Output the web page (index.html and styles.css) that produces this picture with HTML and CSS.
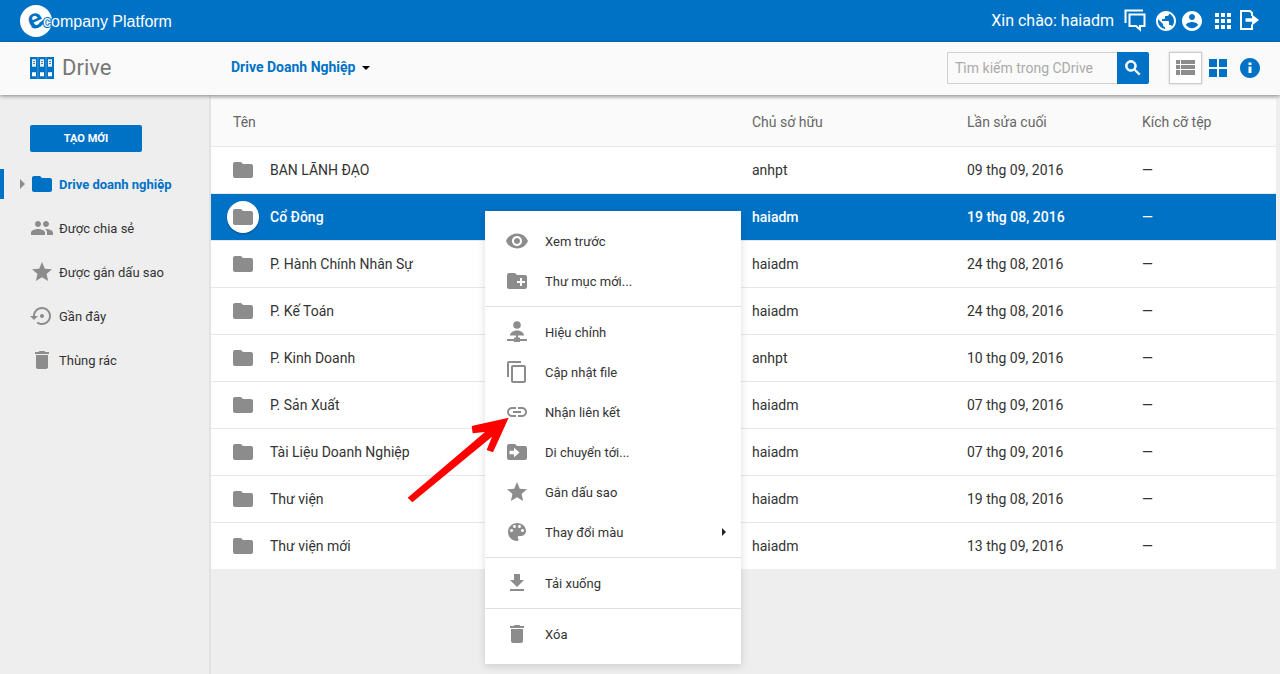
FILE: index.html
```html
<!DOCTYPE html>
<html lang="vi">
<head>
<meta charset="utf-8">
<meta name="viewport" content="width=device-width, initial-scale=1">
<title>Drive</title>
<link rel="stylesheet" href="styles.css">
</head>
<body>
<svg class="sprite" aria-hidden="true">
  <symbol id="folder" viewBox="0 0 24 24"><path d="M10 4H4c-1.100 0-2 .9-2 2v12c0 1.100.9 2 2 2h16c1.100 0 2-.9 2-2V8c0-1.100-.9-2-2-2h-8l-2-2z"/></symbol>
  <symbol id="people" viewBox="0 0 24 24"><path d="M16 11c1.660 0 3-1.340 3-3s-1.340-3-3-3-3 1.340-3 3 1.340 3 3 3zm-8 0c1.660 0 3-1.340 3-3S9.660 5 8 5 5 6.340 5 8s1.340 3 3 3zm0 2c-2.330 0-7 1.170-7 3.500V19h14v-2.500c0-2.330-4.670-3.500-7-3.500zm8 0c-.29 0-.62.02-.97.05 1.160.84 1.970 1.970 1.970 3.450V19h6v-2.500c0-2.330-4.670-3.500-7-3.500z"/></symbol>
  <symbol id="star" viewBox="0 0 24 24"><path d="M12 17.270L18.180 21l-1.640-7.030L22 9.240l-7.190-.61L12 2 9.190 8.630 2 9.240l5.460 4.730L5.820 21z"/></symbol>
  <symbol id="recent" viewBox="0 0 24 24"><path d="M14 12c0-1.100-.9-2-2-2s-2 .9-2 2 .9 2 2 2 2-.9 2-2zm-2-9c-4.970 0-9 4.030-9 9H0l4 4 4-4H5c0-3.870 3.130-7 7-7s7 3.130 7 7-3.130 7-7 7c-1.510 0-2.910-.49-4.060-1.300l-1.420 1.440C8.040 20.300 9.940 21 12 21c4.970 0 9-4.030 9-9s-4.030-9-9-9z"/></symbol>
  <symbol id="trash" viewBox="0 0 24 24"><path d="M6 19c0 1.100.9 2 2 2h8c1.100 0 2-.9 2-2V7H6v12zM19 4h-3.500l-1-1h-5l-1 1H5v2h14V4z"/></symbol>
  <symbol id="eye" viewBox="0 0 24 24"><path d="M12 4.500C7 4.500 2.730 7.610 1 12c1.730 4.390 6 7.500 11 7.500s9.270-3.110 11-7.500c-1.730-4.390-6-7.500-11-7.500zM12 17c-2.760 0-5-2.240-5-5s2.240-5 5-5 5 2.240 5 5-2.240 5-5 5zm0-8c-1.660 0-3 1.340-3 3s1.340 3 3 3 3-1.340 3-3-1.340-3-3-3z"/></symbol>
  <symbol id="new-folder" viewBox="0 0 24 24"><path d="M20 6h-8l-2-2H4c-1.110 0-1.990.89-1.990 2L2 18c0 1.110.89 2 2 2h16c1.110 0 2-.89 2-2V8c0-1.110-.89-2-2-2zm0 8h-3v3h-2v-3h-3v-2h3V9h2v3h3v2z"/></symbol>
  <symbol id="edit-user" viewBox="0 0 24 24"><circle cx="12" cy="5" r="3.800"/><path d="M5 15.500c0-3.500 4-5 7-5s7 1.500 7 5zM11 15h2v2.500h2V19h7v2h-7v1H9v-1H2v-2h7v-1.500h2z"/></symbol>
  <symbol id="copy" viewBox="0 0 24 24"><path d="M16 1H4c-1.100 0-2 .9-2 2v14h2V3h12V1zm3 4H8c-1.100 0-2 .9-2 2v14c0 1.100.9 2 2 2h11c1.100 0 2-.9 2-2V7c0-1.100-.9-2-2-2zm0 16H8V7h11v14z"/></symbol>
  <symbol id="link" viewBox="0 0 24 24"><path d="M3.900 12c0-1.710 1.390-3.100 3.100-3.100h4V7H7c-2.760 0-5 2.240-5 5s2.240 5 5 5h4v-1.900H7c-1.710 0-3.100-1.390-3.100-3.100zM8 13h8v-2H8v2zm9-6h-4v1.900h4c1.710 0 3.100 1.390 3.100 3.100s-1.390 3.100-3.100 3.100h-4V17h4c2.760 0 5-2.240 5-5s-2.240-5-5-5z"/></symbol>
  <symbol id="move" viewBox="0 0 24 24"><path fill-rule="evenodd" d="M10 4H4c-1.100 0-2 .9-2 2v12c0 1.100.9 2 2 2h16c1.100 0 2-.9 2-2V8c0-1.100-.9-2-2-2h-8l-2-2zM4.500 10.800H9V7.700l5.500 4.800L9 17.300v-3.100H4.500z"/></symbol>
  <symbol id="palette" viewBox="0 0 24 24"><path d="M12 3c-4.970 0-9 4.030-9 9s4.030 9 9 9c.83 0 1.500-.67 1.500-1.500 0-.39-.15-.74-.39-1.010-.23-.26-.38-.61-.38-.99 0-.83.67-1.500 1.500-1.500H16c2.760 0 5-2.240 5-5 0-4.420-4.030-8-9-8zm-5.500 9c-.83 0-1.500-.67-1.500-1.500S5.670 9 6.500 9 8 9.670 8 10.500 7.330 12 6.500 12zm3-4C8.670 8 8 7.330 8 6.500S8.670 5 9.500 5s1.500.67 1.500 1.500S10.330 8 9.500 8zm5 0c-.83 0-1.500-.67-1.500-1.500S13.670 5 14.500 5s1.500.67 1.500 1.500S15.330 8 14.500 8zm3 4c-.83 0-1.500-.67-1.500-1.500S16.670 9 17.500 9s1.500.67 1.500 1.500-.67 1.500-1.500 1.500z"/></symbol>
  <symbol id="download" viewBox="0 0 24 24"><path d="M19 9h-4V3H9v6H5l7 7 7-7zM5 18v2h14v-2H5z"/></symbol>
  <symbol id="chat" viewBox="0 0 24 24"><path fill="none" stroke="currentColor" stroke-width="2" d="M2.500 14V1.500H20M6.500 5.500h15V17h-4.500v3.500L13 17H6.500z"/></symbol>
  <symbol id="globe" viewBox="0 0 24 24"><path d="M12 2C6.480 2 2 6.480 2 12s4.480 10 10 10 10-4.480 10-10S17.520 2 12 2zm-1 17.930c-3.950-.49-7-3.850-7-7.930 0-.62.08-1.210.21-1.790L9 15v1c0 1.100.9 2 2 2v1.930zm6.900-2.540c-.26-.81-1-1.390-1.900-1.390h-1v-3c0-.55-.45-1-1-1H8v-2h2c.55 0 1-.45 1-1V7h2c1.100 0 2-.9 2-2v-.41c2.930 1.190 5 4.060 5 7.410 0 2.080-.8 3.970-2.100 5.390z"/></symbol>
  <symbol id="account" viewBox="0 0 24 24"><path d="M12 2C6.480 2 2 6.480 2 12s4.480 10 10 10 10-4.480 10-10S17.520 2 12 2zm0 3c1.660 0 3 1.340 3 3s-1.340 3-3 3-3-1.340-3-3 1.340-3 3-3zm0 14.200c-2.500 0-4.710-1.280-6-3.220.03-1.990 4-3.080 6-3.080 1.990 0 5.970 1.090 6 3.080-1.290 1.940-3.500 3.220-6 3.220z"/></symbol>
  <symbol id="apps" viewBox="0 0 24 24"><path d="M4 8h4V4H4v4zm6 12h4v-4h-4v4zm-6 0h4v-4H4v4zm0-6h4v-4H4v4zm6 0h4v-4h-4v4zm6-10v4h4V4h-4zm-6 4h4V4h-4v4zm6 6h4v-4h-4v4zm0 6h4v-4h-4v4z"/></symbol>
  <symbol id="exit" viewBox="0 0 24 24"><path fill="none" stroke="currentColor" stroke-width="2" d="M15 7V4l-2-2H4v18h11v-4.500"/><path d="M8.500 9.300H15V5.500l7 5.500-7 5.500v-3.800H8.500z"/></symbol>
  <symbol id="search" viewBox="0 0 24 24"><path d="M15.500 14h-.79l-.28-.27C15.410 12.590 16 11.110 16 9.500 16 5.910 13.090 3 9.500 3S3 5.910 3 9.500 5.910 16 9.500 16c1.610 0 3.090-.59 4.230-1.570l.27.28v.79l5 4.990L20.490 19l-4.990-5zm-6 0C7.010 14 5 11.990 5 9.500S7.010 5 9.500 5 14 7.010 14 9.500 11.990 14 9.500 14z" stroke="currentColor"/></symbol>
  <symbol id="list" viewBox="0 0 24 24"><path d="M2 4h4v4H2zM7 4h14v4H7zM2 9h4v4H2zM7 9h14v4H7zM2 14h4v5H2zM7 14h14v5H7z"/></symbol>
  <symbol id="grid" viewBox="0 0 24 24"><path d="M3 3h8v8H3zM13 3h8v8h-8zM3 13h8v8H3zM13 13h8v8h-8z"/></symbol>
  <symbol id="info" viewBox="0 0 24 24"><path d="M12 2C6.480 2 2 6.480 2 12s4.480 10 10 10 10-4.480 10-10S17.520 2 12 2zm1.500 15h-3v-6.500h3V17zm0-8h-3V6.500h3V9z"/></symbol>
</svg>

<header class="topbar">
  <a class="brand" href="#">
    <svg class="brand-mark" viewBox="0 0 160 34" role="img" aria-label="ecompany Platform">
      <circle cx="16" cy="17" r="16" fill="#fff"/>
      <text class="mark-e" x="8" y="24" transform="rotate(-24 15 17)">e</text>
      <path fill="none" stroke="#0072c6" stroke-width="3" d="M12 22c5 3 8-1 12-5"/>
      <text class="mark-name" x="23" y="23">company Platform</text>
    </svg>
  </a>
  <span class="greeting">Xin chào: haiadm</span>
  <nav class="top-actions" aria-label="Tài khoản">
    <button class="top-btn chat-btn" aria-label="Tin nhắn"><svg class="icon"><use href="#chat"/></svg></button>
    <button class="top-btn" aria-label="Ngôn ngữ"><svg class="icon"><use href="#globe"/></svg></button>
    <button class="top-btn apps-gap" aria-label="Hồ sơ"><svg class="icon"><use href="#account"/></svg></button>
    <button class="top-btn" aria-label="Ứng dụng"><svg class="icon"><use href="#apps"/></svg></button>
    <button class="top-btn" aria-label="Đăng xuất"><svg class="icon"><use href="#exit"/></svg></button>
  </nav>
</header>

<div class="toolbar">
  <h1 class="app-title">
    <svg class="binders" viewBox="0 0 24 22" aria-hidden="true">
      <path fill="#8fc0e6" d="M1 0h22v22H1z"/>
      <path fill="#0072c6" d="M0 0h7.700v22H0zM8.200 0h7.600v22H8.200zM16.300 0H24v22h-7.700z"/>
      <path fill="#e4eef7" d="M2 2.300h4v7.400H2zM10 2.300h4v7.400h-4zM18 2.300h4v7.400h-4z"/>
      <path fill="#fff" d="M2 15.300h4v4H2zM10 15.300h4v4h-4zM18 15.300h4v4h-4z"/>
      <path stroke="#6b7c8c" d="M3 4.500h2M3 6.500h2M11 4.500h2M11 6.500h2M19 4.500h2M19 6.500h2"/>
    </svg>
    Drive
  </h1>
  <button class="scope">Drive Doanh Nghiệp <span class="caret"></span></button>
  <form class="search" role="search">
    <input class="search-input" type="text" placeholder="Tìm kiếm trong CDrive" aria-label="Tìm kiếm trong CDrive">
    <button class="search-btn" type="button" aria-label="Tìm kiếm"><svg class="icon-small"><use href="#search"/></svg></button>
  </form>
  <div class="views">
    <button class="view-btn view-active" aria-label="Danh sách"><svg class="icon"><use href="#list"/></svg></button>
    <button class="view-btn" aria-label="Lưới"><svg class="icon"><use href="#grid"/></svg></button>
    <button class="view-btn" aria-label="Thông tin"><svg class="icon"><use href="#info"/></svg></button>
  </div>
</div>

<div class="layout">
  <aside class="sidebar">
    <button class="create">TẠO MỚI</button>
    <nav class="side-nav">
      <a class="side-link side-active" href="#"><span class="expander"></span><svg class="icon"><use href="#folder"/></svg>Drive doanh nghiệp</a>
      <a class="side-link" href="#"><svg class="icon"><use href="#people"/></svg>Được chia sẻ</a>
      <a class="side-link" href="#"><svg class="icon"><use href="#star"/></svg>Được gắn dấu sao</a>
      <a class="side-link" href="#"><svg class="icon"><use href="#recent"/></svg>Gần đây</a>
      <a class="side-link" href="#"><svg class="icon"><use href="#trash"/></svg>Thùng rác</a>
    </nav>
  </aside>

  <main class="content">
    <table class="files">
      <colgroup><col><col class="col-owner"><col class="col-date"><col class="col-size"></colgroup>
      <thead>
        <tr><th>Tên</th><th>Chủ sở hữu</th><th>Lần sửa cuối</th><th>Kích cỡ tệp</th></tr>
      </thead>
      <tbody>
        <tr><td><div class="name"><span class="badge"><svg class="icon"><use href="#folder"/></svg></span>BAN LÃNH ĐẠO</div></td><td>anhpt</td><td>09 thg 09, 2016</td><td>—</td></tr>
        <tr class="selected"><td><div class="name"><span class="badge"><svg class="icon"><use href="#folder"/></svg></span>Cổ Đông</div></td><td>haiadm</td><td>19 thg 08, 2016</td><td>—</td></tr>
        <tr><td><div class="name"><span class="badge"><svg class="icon"><use href="#folder"/></svg></span>P. Hành Chính Nhân Sự</div></td><td>haiadm</td><td>24 thg 08, 2016</td><td>—</td></tr>
        <tr><td><div class="name"><span class="badge"><svg class="icon"><use href="#folder"/></svg></span>P. Kế Toán</div></td><td>haiadm</td><td>24 thg 08, 2016</td><td>—</td></tr>
        <tr><td><div class="name"><span class="badge"><svg class="icon"><use href="#folder"/></svg></span>P. Kinh Doanh</div></td><td>anhpt</td><td>10 thg 09, 2016</td><td>—</td></tr>
        <tr><td><div class="name"><span class="badge"><svg class="icon"><use href="#folder"/></svg></span>P. Sản Xuất</div></td><td>haiadm</td><td>07 thg 09, 2016</td><td>—</td></tr>
        <tr><td><div class="name"><span class="badge"><svg class="icon"><use href="#folder"/></svg></span>Tài Liệu Doanh Nghiệp</div></td><td>haiadm</td><td>07 thg 09, 2016</td><td>—</td></tr>
        <tr><td><div class="name"><span class="badge"><svg class="icon"><use href="#folder"/></svg></span>Thư viện</div></td><td>haiadm</td><td>19 thg 08, 2016</td><td>—</td></tr>
        <tr><td><div class="name"><span class="badge"><svg class="icon"><use href="#folder"/></svg></span>Thư viện mới</div></td><td>haiadm</td><td>13 thg 09, 2016</td><td>—</td></tr>
      </tbody>
    </table>

    <div class="menu" role="menu">
      <button class="menu-item" role="menuitem"><svg class="icon"><use href="#eye"/></svg>Xem trước</button>
      <button class="menu-item" role="menuitem"><svg class="icon"><use href="#new-folder"/></svg>Thư mục mới...</button>
      <hr class="menu-line">
      <button class="menu-item" role="menuitem"><svg class="icon"><use href="#edit-user"/></svg>Hiệu chỉnh</button>
      <button class="menu-item" role="menuitem"><svg class="icon"><use href="#copy"/></svg>Cập nhật file</button>
      <button class="menu-item" role="menuitem"><svg class="icon"><use href="#link"/></svg>Nhận liên kết</button>
      <button class="menu-item" role="menuitem"><svg class="icon"><use href="#move"/></svg>Di chuyển tới...</button>
      <button class="menu-item" role="menuitem"><svg class="icon"><use href="#star"/></svg>Gắn dấu sao</button>
      <button class="menu-item" role="menuitem"><svg class="icon"><use href="#palette"/></svg>Thay đổi màu<span class="submenu"></span></button>
      <hr class="menu-line">
      <button class="menu-item" role="menuitem"><svg class="icon"><use href="#download"/></svg>Tải xuống</button>
      <hr class="menu-line">
      <button class="menu-item" role="menuitem"><svg class="icon"><use href="#trash"/></svg>Xóa</button>
    </div>

    <svg class="pointer" viewBox="15 105 315 270" aria-hidden="true"><path fill="#f00" d="M23 353L255 156l-37 4-3-22 111-25-47 104-19-7 16-40L37 367z"/></svg>
  </main>
</div>
</body>
</html>
```

FILE: styles.css
```css
* { box-sizing: border-box; }

body {
  margin: 0;
  min-height: 100vh;
  display: flex;
  flex-direction: column;
  background: #eee;
  color: #333;
  font: 14px/19px Roboto, "Noto Sans", sans-serif;
}

button, input { font: inherit; color: inherit; }
button { margin: 0; padding: 0; border: 0; background: none; cursor: pointer; }
a { color: inherit; text-decoration: none; }

.sprite { position: absolute; width: 0; height: 0; }
.icon { display: block; flex: none; width: 24px; height: 24px; fill: currentColor; }
.icon-small { display: block; width: 20px; height: 20px; fill: currentColor; }

/* Top bar */
.topbar {
  display: flex;
  align-items: center;
  height: 42px;
  padding: 0 17px 0 20px;
  background: #0072c6;
  color: #fff;
}
.brand { margin-right: auto; }
.brand-mark { display: block; width: 160px; height: 34px; overflow: visible; }
.mark-e { font: bold 27px "Liberation Sans", Arial, sans-serif; fill: #0072c6; }
.mark-name {
  font: 16px "Liberation Sans", Arial, sans-serif;
  fill: #fff;
  stroke: #0072c6;
  stroke-width: 2px;
  paint-order: stroke;
}
.greeting { font-size: 16px; line-height: 18px; margin-right: 9px; }
.top-actions { display: flex; }
.chat-btn { margin-right: 7px; }
.top-btn + .top-btn { margin-right: 2px; }
.top-btn.apps-gap { margin-right: 7px; }

/* Toolbar */
.toolbar {
  position: relative;
  z-index: 1;
  display: flex;
  align-items: center;
  height: 53px;
  padding: 0 14px 2px 30px;
  background: #fafafa;
  box-shadow: 0 1px 4px rgba(0, 0, 0, .45);
}
.app-title {
  display: flex;
  align-items: center;
  gap: 8px;
  width: 201px;
  margin: 0;
  color: #777;
  font-size: 22px;
  font-weight: 400;
  line-height: 28px;
}
.binders { width: 24px; height: 22px; }
.scope {
  display: flex;
  align-items: center;
  gap: 6px;
  margin-right: auto;
  color: #0072c6;
  font-weight: 700;
}
.caret { border: 4px solid transparent; border-top-color: #000; border-bottom: 0; }
.search { display: flex; margin-right: 20px; }
.search-input {
  width: 170px;
  height: 32px;
  padding: 0 7px;
  border: 1px solid #d0d0d0;
  border-right: 0;
  border-radius: 0;
  background: #fafafa;
  outline: 0;
}
.search-input::placeholder { color: #aaa; opacity: 1; }
.search-btn {
  display: grid;
  place-items: center;
  width: 32px;
  height: 32px;
  border-radius: 0 2px 2px 0;
  background: #0072c6;
  color: #fff;
}
.views { display: flex; }
.view-btn { display: grid; place-items: center; width: 32px; height: 32px; color: #0072c6; }
.view-active {
  width: 33px;
  border: 1px solid #ccc;
  background: #fff;
  box-shadow: 0 0 2px rgba(0, 0, 0, .2);
  color: #8c8c8c;
}

/* Layout */
.layout { display: flex; flex: 1; }
.sidebar { flex: none; width: 211px; padding-top: 30px; border-right: 2px solid #e2e2e2; font-size: 13px; line-height: 21px; }
.create {
  width: 112px;
  height: 27px;
  margin: 0 0 17px 30px;
  border-radius: 2px;
  background: #0072c6;
  color: #fff;
  font-size: 11px;
  font-weight: 700;
}
.side-nav { display: flex; flex-direction: column; gap: 14px; }
.side-link { display: flex; align-items: center; gap: 5px; height: 30px; padding-left: 30px; }
.side-link .icon { color: #8c8c8c; }
.side-active { padding-left: 16px; border-left: 4px solid #0072c6; color: #0072c6; font-weight: 700; }
.side-active .icon { color: #0072c6; }
.expander { border: 5px solid transparent; border-left-color: #8c8c8c; border-right: 0; }

/* File list */
.content { position: relative; flex: 1; min-width: 0; padding: 4px 4px 0 0; }
.files { width: 100%; border-collapse: separate; border-spacing: 0; table-layout: fixed; background: #fff; }
.col-owner { width: 215px; }
.col-date { width: 175px; }
.col-size { width: 134px; }
.files th {
  height: 48px;
  padding: 0;
  border-bottom: 1px solid #e8e8e8;
  background: #fafafa;
  color: #666;
  font-weight: 400;
  text-align: left;
}
.files th:first-child { padding-left: 22px; }
.files td { height: 47px; padding: 0 0 1px; border-bottom: 1px solid #e8e8e8; line-height: 18px; }
.files tbody tr:last-child td { height: 46px; border-bottom: 0; }
.name { display: flex; align-items: center; gap: 11px; padding-left: 16px; }
.badge { display: grid; place-items: center; width: 32px; height: 32px; border-radius: 50%; color: #8c8c8c; }
.selected td { background: #0072c6; color: #fff; font-weight: 500; }
.selected .badge { background: #fff; box-shadow: 0 1px 2px rgba(0, 0, 0, .3); }

/* Context menu */
.menu {
  position: absolute;
  top: 116px;
  left: 274px;
  width: 256px;
  padding: 10px 0;
  background: #fff;
  box-shadow: 0 2px 8px rgba(0, 0, 0, .14);
}
.menu-item {
  display: flex;
  align-items: center;
  gap: 16px;
  width: 100%;
  height: 40px;
  padding: 0 15px 0 20px;
  font-size: 13px;
  line-height: 21px;
}
.menu-item .icon { color: #8c8c8c; }
.menu-line { height: 1px; margin: 5px 0; border: 0; background: #e0e0e0; }
.submenu { margin-left: auto; border: 4px solid transparent; border-left-color: #222; border-right: 0; }

.pointer { position: absolute; top: 320px; left: 194px; width: 105px; height: 90px; }
```
